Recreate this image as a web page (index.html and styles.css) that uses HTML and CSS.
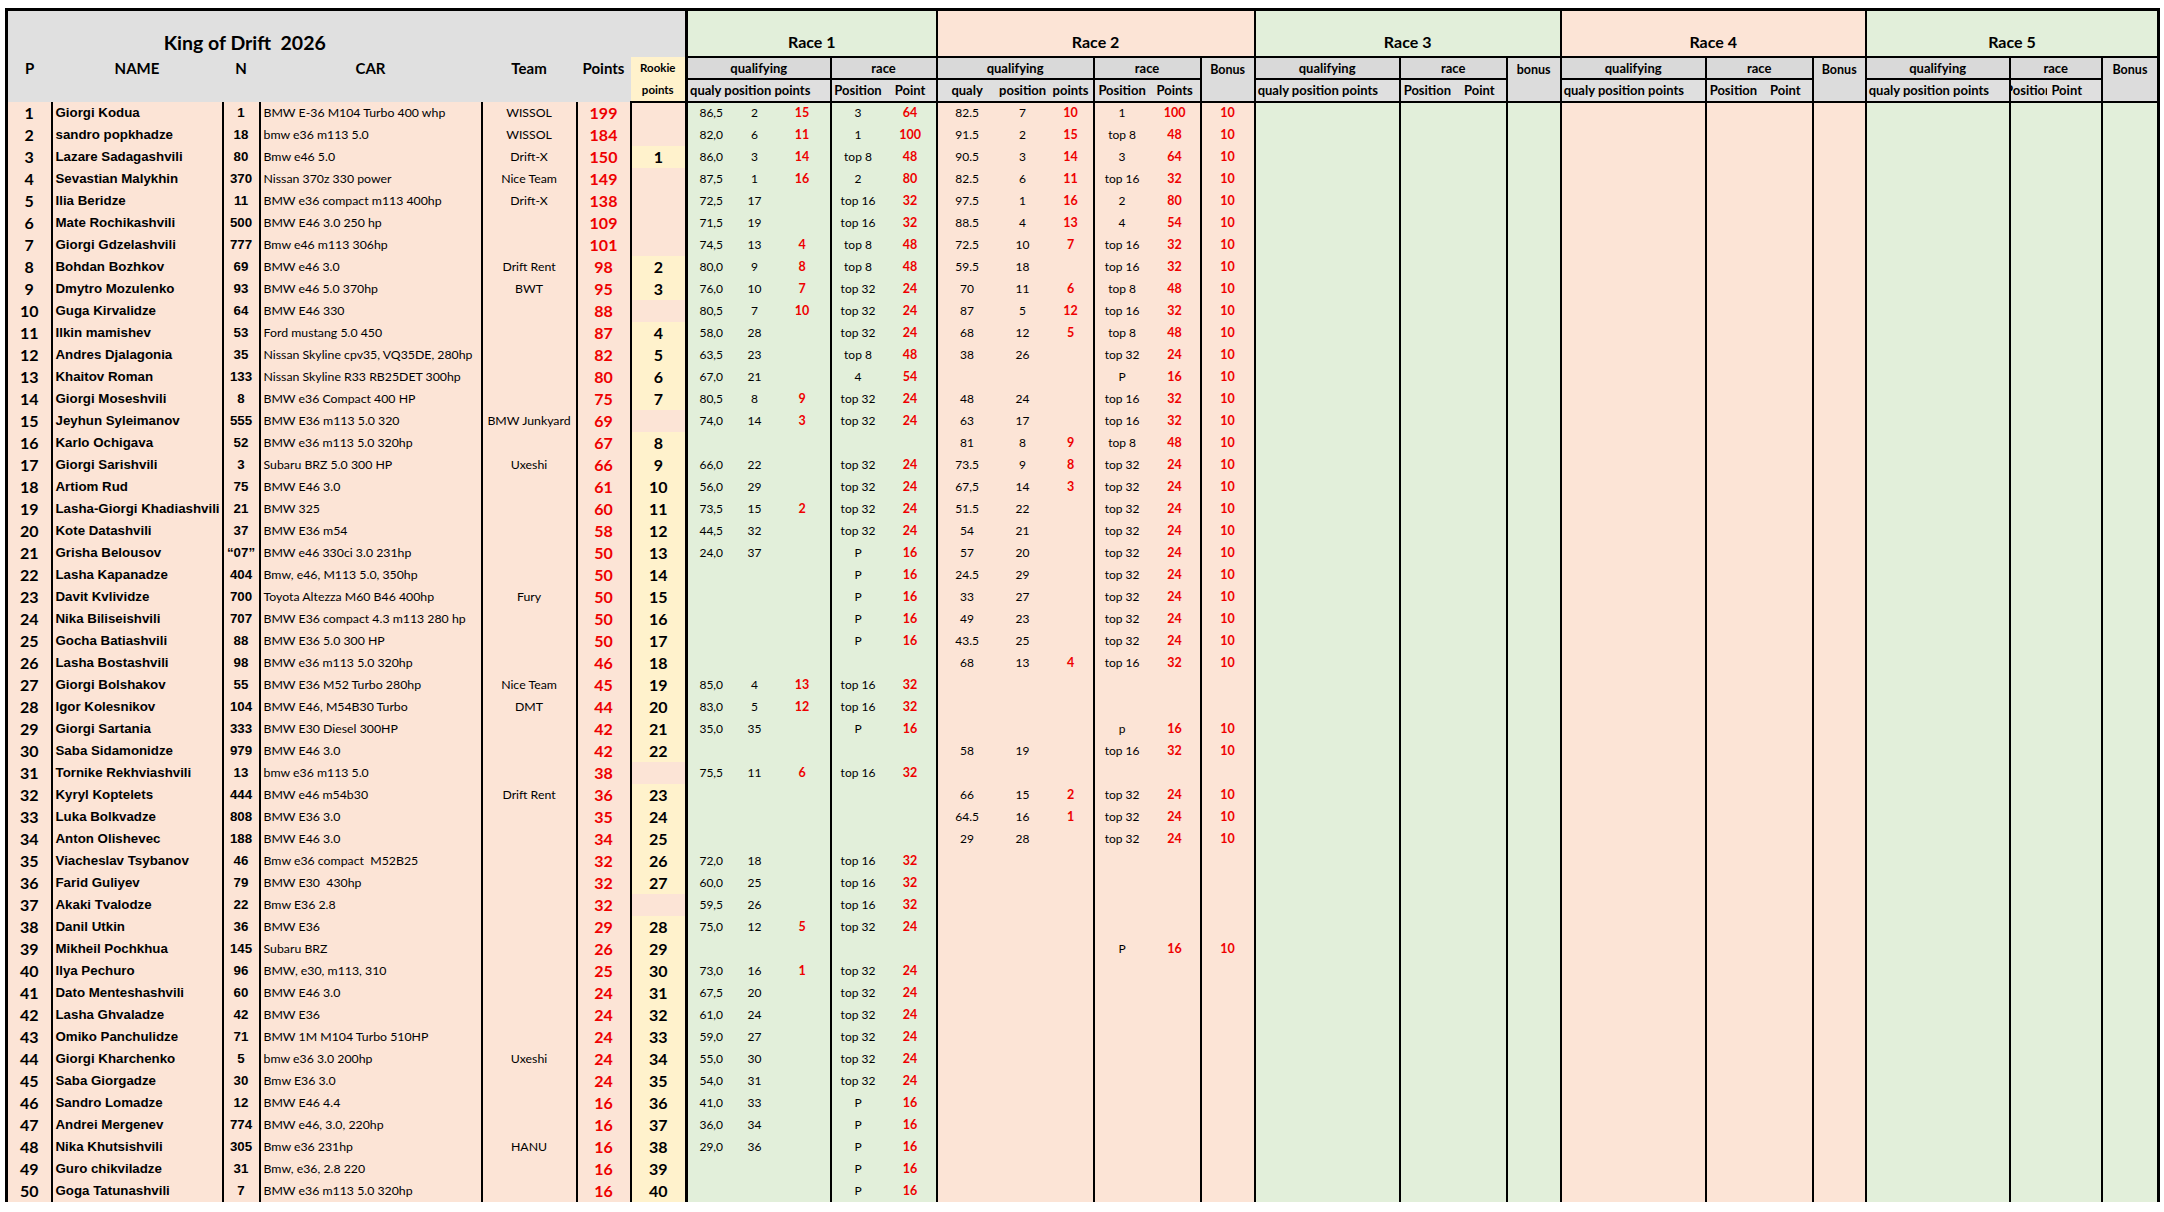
FILE: index.html
```html
<!DOCTYPE html>
<html lang="en">
<head>
<meta charset="utf-8">
<title>King of Drift 2026</title>
<link rel="stylesheet" href="styles.css">
</head>
<body>
<table class="sheet">
<colgroup>
<col class="w45"><col class="w171"><col class="w37"><col class="w222"><col class="w95"><col class="w54"><col class="w56">
<col class="w48"><col class="w40"><col class="w56"><col class="w54"><col class="w52">
<col class="w60"><col class="w52"><col class="w45"><col class="w56"><col class="w51"><col class="w54">
<col class="w145"><col class="w107"><col class="w54">
<col class="w145"><col class="w107"><col class="w53">
<col class="w144"><col class="w92"><col class="w57">
</colgroup>
<thead>
<tr class="ra">
<th colspan="4" class="hl ttl edge-l">King of Drift&nbsp;&nbsp;2026</th>
<th colspan="3" class="hl"></th>
<th colspan="5" class="rt g wide">Race 1</th>
<th colspan="6" class="rt p">Race 2</th>
<th colspan="3" class="rt g">Race 3</th>
<th colspan="3" class="rt p">Race 4</th>
<th colspan="3" class="rt g edge-r">Race 5</th>
</tr>
<tr class="rb">
<th class="hl lbl edge-l">P</th>
<th class="hl lbl">NAME</th>
<th class="hl lbl">N</th>
<th class="hl lbl">CAR</th>
<th class="hl lbl">Team</th>
<th class="hl lbl">Points</th>
<th class="rk">Rookie</th>
<th colspan="3" class="sb wide">qualifying</th>
<th colspan="2" class="sb">race</th>
<th colspan="3" class="sb">qualifying</th>
<th colspan="2" class="sb">race</th>
<th rowspan="2" class="bonus">Bonus</th>
<th class="sb">qualifying</th>
<th class="sb">race</th>
<th rowspan="2" class="bonus">bonus</th>
<th class="sb">qualifying</th>
<th class="sb">race</th>
<th rowspan="2" class="bonus">Bonus</th>
<th class="sb">qualifying</th>
<th class="sb">race</th>
<th rowspan="2" class="bonus edge-r">Bonus</th>
</tr>
<tr class="rc">
<th colspan="6" class="hl edge-l"></th>
<th class="rk rk-low">points</th>
<th colspan="3" class="sc bl wide left">qualy position points</th>
<th class="sc bl">Position</th>
<th class="sc">Point</th>
<th class="sc bl">qualy</th>
<th class="sc">position</th>
<th class="sc">points</th>
<th class="sc bl">Position</th>
<th class="sc">Points</th>
<th class="sc bl left">qualy position points</th>
<th class="sc bl"><span class="pp"><span>Position</span><span>Point</span></span></th>
<th class="sc bl left">qualy position points</th>
<th class="sc bl"><span class="pp"><span>Position</span><span>Point</span></span></th>
<th class="sc bl left">qualy position points</th>
<th class="sc bl"><span class="pp5"><span class="clip">Position</span><span class="pt">Point</span></span></th>
</tr>
</thead>
<tbody>
<tr><td>1</td><td>Giorgi Kodua</td><td>1</td><td>BMW E-36 M104 Turbo 400 whp</td><td>WISSOL</td><td>199</td><td></td><td>86,5</td><td>2</td><td>15</td><td>3</td><td>64</td><td>82.5</td><td>7</td><td>10</td><td>1</td><td>100</td><td>10</td><td></td><td></td><td></td><td></td><td></td><td></td><td></td><td></td><td></td></tr>
<tr><td>2</td><td>sandro popkhadze</td><td>18</td><td>bmw e36 m113 5.0</td><td>WISSOL</td><td>184</td><td></td><td>82,0</td><td>6</td><td>11</td><td>1</td><td>100</td><td>91.5</td><td>2</td><td>15</td><td>top 8</td><td>48</td><td>10</td><td></td><td></td><td></td><td></td><td></td><td></td><td></td><td></td><td></td></tr>
<tr><td>3</td><td>Lazare Sadagashvili</td><td>80</td><td>Bmw e46 5.0</td><td>Drift-X</td><td>150</td><td>1</td><td>86,0</td><td>3</td><td>14</td><td>top 8</td><td>48</td><td>90.5</td><td>3</td><td>14</td><td>3</td><td>64</td><td>10</td><td></td><td></td><td></td><td></td><td></td><td></td><td></td><td></td><td></td></tr>
<tr><td>4</td><td>Sevastian Malykhin</td><td>370</td><td>Nissan 370z 330 power</td><td>Nice Team</td><td>149</td><td></td><td>87,5</td><td>1</td><td>16</td><td>2</td><td>80</td><td>82.5</td><td>6</td><td>11</td><td>top 16</td><td>32</td><td>10</td><td></td><td></td><td></td><td></td><td></td><td></td><td></td><td></td><td></td></tr>
<tr><td>5</td><td>Ilia Beridze</td><td>11</td><td>BMW e36 compact m113 400hp</td><td>Drift-X</td><td>138</td><td></td><td>72,5</td><td>17</td><td></td><td>top 16</td><td>32</td><td>97.5</td><td>1</td><td>16</td><td>2</td><td>80</td><td>10</td><td></td><td></td><td></td><td></td><td></td><td></td><td></td><td></td><td></td></tr>
<tr><td>6</td><td>Mate Rochikashvili</td><td>500</td><td>BMW E46 3.0 250 hp</td><td></td><td>109</td><td></td><td>71,5</td><td>19</td><td></td><td>top 16</td><td>32</td><td>88.5</td><td>4</td><td>13</td><td>4</td><td>54</td><td>10</td><td></td><td></td><td></td><td></td><td></td><td></td><td></td><td></td><td></td></tr>
<tr><td>7</td><td>Giorgi Gdzelashvili</td><td>777</td><td>Bmw e46 m113 306hp</td><td></td><td>101</td><td></td><td>74,5</td><td>13</td><td>4</td><td>top 8</td><td>48</td><td>72.5</td><td>10</td><td>7</td><td>top 16</td><td>32</td><td>10</td><td></td><td></td><td></td><td></td><td></td><td></td><td></td><td></td><td></td></tr>
<tr><td>8</td><td>Bohdan Bozhkov</td><td>69</td><td>BMW e46 3.0</td><td>Drift Rent</td><td>98</td><td>2</td><td>80,0</td><td>9</td><td>8</td><td>top 8</td><td>48</td><td>59.5</td><td>18</td><td></td><td>top 16</td><td>32</td><td>10</td><td></td><td></td><td></td><td></td><td></td><td></td><td></td><td></td><td></td></tr>
<tr><td>9</td><td>Dmytro Mozulenko</td><td>93</td><td>BMW e46 5.0 370hp</td><td>BWT</td><td>95</td><td>3</td><td>76,0</td><td>10</td><td>7</td><td>top 32</td><td>24</td><td>70</td><td>11</td><td>6</td><td>top 8</td><td>48</td><td>10</td><td></td><td></td><td></td><td></td><td></td><td></td><td></td><td></td><td></td></tr>
<tr><td>10</td><td>Guga Kirvalidze</td><td>64</td><td>BMW E46 330</td><td></td><td>88</td><td></td><td>80,5</td><td>7</td><td>10</td><td>top 32</td><td>24</td><td>87</td><td>5</td><td>12</td><td>top 16</td><td>32</td><td>10</td><td></td><td></td><td></td><td></td><td></td><td></td><td></td><td></td><td></td></tr>
<tr><td>11</td><td>Ilkin mamishev</td><td>53</td><td>Ford mustang 5.0 450</td><td></td><td>87</td><td>4</td><td>58,0</td><td>28</td><td></td><td>top 32</td><td>24</td><td>68</td><td>12</td><td>5</td><td>top 8</td><td>48</td><td>10</td><td></td><td></td><td></td><td></td><td></td><td></td><td></td><td></td><td></td></tr>
<tr><td>12</td><td>Andres Djalagonia</td><td>35</td><td>Nissan Skyline cpv35, VQ35DE, 280hp</td><td></td><td>82</td><td>5</td><td>63,5</td><td>23</td><td></td><td>top 8</td><td>48</td><td>38</td><td>26</td><td></td><td>top 32</td><td>24</td><td>10</td><td></td><td></td><td></td><td></td><td></td><td></td><td></td><td></td><td></td></tr>
<tr><td>13</td><td>Khaitov Roman</td><td>133</td><td>Nissan Skyline R33 RB25DET 300hp</td><td></td><td>80</td><td>6</td><td>67,0</td><td>21</td><td></td><td>4</td><td>54</td><td></td><td></td><td></td><td>P</td><td>16</td><td>10</td><td></td><td></td><td></td><td></td><td></td><td></td><td></td><td></td><td></td></tr>
<tr><td>14</td><td>Giorgi Moseshvili</td><td>8</td><td>BMW e36 Compact 400 HP</td><td></td><td>75</td><td>7</td><td>80,5</td><td>8</td><td>9</td><td>top 32</td><td>24</td><td>48</td><td>24</td><td></td><td>top 16</td><td>32</td><td>10</td><td></td><td></td><td></td><td></td><td></td><td></td><td></td><td></td><td></td></tr>
<tr><td>15</td><td>Jeyhun Syleimanov</td><td>555</td><td>BMW E36 m113 5.0 320</td><td>BMW Junkyard</td><td>69</td><td></td><td>74,0</td><td>14</td><td>3</td><td>top 32</td><td>24</td><td>63</td><td>17</td><td></td><td>top 16</td><td>32</td><td>10</td><td></td><td></td><td></td><td></td><td></td><td></td><td></td><td></td><td></td></tr>
<tr><td>16</td><td>Karlo Ochigava</td><td>52</td><td>BMW e36 m113 5.0 320hp</td><td></td><td>67</td><td>8</td><td></td><td></td><td></td><td></td><td></td><td>81</td><td>8</td><td>9</td><td>top 8</td><td>48</td><td>10</td><td></td><td></td><td></td><td></td><td></td><td></td><td></td><td></td><td></td></tr>
<tr><td>17</td><td>Giorgi Sarishvili</td><td>3</td><td>Subaru BRZ 5.0 300 HP</td><td>Uxeshi</td><td>66</td><td>9</td><td>66,0</td><td>22</td><td></td><td>top 32</td><td>24</td><td>73.5</td><td>9</td><td>8</td><td>top 32</td><td>24</td><td>10</td><td></td><td></td><td></td><td></td><td></td><td></td><td></td><td></td><td></td></tr>
<tr><td>18</td><td>Artiom Rud</td><td>75</td><td>BMW E46 3.0</td><td></td><td>61</td><td>10</td><td>56,0</td><td>29</td><td></td><td>top 32</td><td>24</td><td>67,5</td><td>14</td><td>3</td><td>top 32</td><td>24</td><td>10</td><td></td><td></td><td></td><td></td><td></td><td></td><td></td><td></td><td></td></tr>
<tr><td>19</td><td>Lasha-Giorgi Khadiashvili</td><td>21</td><td>BMW 325</td><td></td><td>60</td><td>11</td><td>73,5</td><td>15</td><td>2</td><td>top 32</td><td>24</td><td>51.5</td><td>22</td><td></td><td>top 32</td><td>24</td><td>10</td><td></td><td></td><td></td><td></td><td></td><td></td><td></td><td></td><td></td></tr>
<tr><td>20</td><td>Kote Datashvili</td><td>37</td><td>BMW E36 m54</td><td></td><td>58</td><td>12</td><td>44,5</td><td>32</td><td></td><td>top 32</td><td>24</td><td>54</td><td>21</td><td></td><td>top 32</td><td>24</td><td>10</td><td></td><td></td><td></td><td></td><td></td><td></td><td></td><td></td><td></td></tr>
<tr><td>21</td><td>Grisha Belousov</td><td>“07”</td><td>BMW e46 330ci 3.0 231hp</td><td></td><td>50</td><td>13</td><td>24,0</td><td>37</td><td></td><td>P</td><td>16</td><td>57</td><td>20</td><td></td><td>top 32</td><td>24</td><td>10</td><td></td><td></td><td></td><td></td><td></td><td></td><td></td><td></td><td></td></tr>
<tr><td>22</td><td>Lasha Kapanadze</td><td>404</td><td>Bmw, e46, M113 5.0, 350hp</td><td></td><td>50</td><td>14</td><td></td><td></td><td></td><td>P</td><td>16</td><td>24.5</td><td>29</td><td></td><td>top 32</td><td>24</td><td>10</td><td></td><td></td><td></td><td></td><td></td><td></td><td></td><td></td><td></td></tr>
<tr><td>23</td><td>Davit Kvlividze</td><td>700</td><td>Toyota Altezza M60 B46 400hp</td><td>Fury</td><td>50</td><td>15</td><td></td><td></td><td></td><td>P</td><td>16</td><td>33</td><td>27</td><td></td><td>top 32</td><td>24</td><td>10</td><td></td><td></td><td></td><td></td><td></td><td></td><td></td><td></td><td></td></tr>
<tr><td>24</td><td>Nika Biliseishvili</td><td>707</td><td>BMW E36 compact 4.3 m113 280 hp</td><td></td><td>50</td><td>16</td><td></td><td></td><td></td><td>P</td><td>16</td><td>49</td><td>23</td><td></td><td>top 32</td><td>24</td><td>10</td><td></td><td></td><td></td><td></td><td></td><td></td><td></td><td></td><td></td></tr>
<tr><td>25</td><td>Gocha Batiashvili</td><td>88</td><td>BMW E36 5.0 300 HP</td><td></td><td>50</td><td>17</td><td></td><td></td><td></td><td>P</td><td>16</td><td>43.5</td><td>25</td><td></td><td>top 32</td><td>24</td><td>10</td><td></td><td></td><td></td><td></td><td></td><td></td><td></td><td></td><td></td></tr>
<tr><td>26</td><td>Lasha Bostashvili</td><td>98</td><td>BMW e36 m113 5.0 320hp</td><td></td><td>46</td><td>18</td><td></td><td></td><td></td><td></td><td></td><td>68</td><td>13</td><td>4</td><td>top 16</td><td>32</td><td>10</td><td></td><td></td><td></td><td></td><td></td><td></td><td></td><td></td><td></td></tr>
<tr><td>27</td><td>Giorgi Bolshakov</td><td>55</td><td>BMW E36 M52 Turbo 280hp</td><td>Nice Team</td><td>45</td><td>19</td><td>85,0</td><td>4</td><td>13</td><td>top 16</td><td>32</td><td></td><td></td><td></td><td></td><td></td><td></td><td></td><td></td><td></td><td></td><td></td><td></td><td></td><td></td><td></td></tr>
<tr><td>28</td><td>Igor Kolesnikov</td><td>104</td><td>BMW E46, M54B30 Turbo</td><td>DMT</td><td>44</td><td>20</td><td>83,0</td><td>5</td><td>12</td><td>top 16</td><td>32</td><td></td><td></td><td></td><td></td><td></td><td></td><td></td><td></td><td></td><td></td><td></td><td></td><td></td><td></td><td></td></tr>
<tr><td>29</td><td>Giorgi Sartania</td><td>333</td><td>BMW E30 Diesel 300HP</td><td></td><td>42</td><td>21</td><td>35,0</td><td>35</td><td></td><td>P</td><td>16</td><td></td><td></td><td></td><td>p</td><td>16</td><td>10</td><td></td><td></td><td></td><td></td><td></td><td></td><td></td><td></td><td></td></tr>
<tr><td>30</td><td>Saba Sidamonidze</td><td>979</td><td>BMW E46 3.0</td><td></td><td>42</td><td>22</td><td></td><td></td><td></td><td></td><td></td><td>58</td><td>19</td><td></td><td>top 16</td><td>32</td><td>10</td><td></td><td></td><td></td><td></td><td></td><td></td><td></td><td></td><td></td></tr>
<tr><td>31</td><td>Tornike Rekhviashvili</td><td>13</td><td>bmw e36 m113 5.0</td><td></td><td>38</td><td></td><td>75,5</td><td>11</td><td>6</td><td>top 16</td><td>32</td><td></td><td></td><td></td><td></td><td></td><td></td><td></td><td></td><td></td><td></td><td></td><td></td><td></td><td></td><td></td></tr>
<tr><td>32</td><td>Kyryl Koptelets</td><td>444</td><td>BMW e46 m54b30</td><td>Drift Rent</td><td>36</td><td>23</td><td></td><td></td><td></td><td></td><td></td><td>66</td><td>15</td><td>2</td><td>top 32</td><td>24</td><td>10</td><td></td><td></td><td></td><td></td><td></td><td></td><td></td><td></td><td></td></tr>
<tr><td>33</td><td>Luka Bolkvadze</td><td>808</td><td>BMW E36 3.0</td><td></td><td>35</td><td>24</td><td></td><td></td><td></td><td></td><td></td><td>64.5</td><td>16</td><td>1</td><td>top 32</td><td>24</td><td>10</td><td></td><td></td><td></td><td></td><td></td><td></td><td></td><td></td><td></td></tr>
<tr><td>34</td><td>Anton Olishevec</td><td>188</td><td>BMW E46 3.0</td><td></td><td>34</td><td>25</td><td></td><td></td><td></td><td></td><td></td><td>29</td><td>28</td><td></td><td>top 32</td><td>24</td><td>10</td><td></td><td></td><td></td><td></td><td></td><td></td><td></td><td></td><td></td></tr>
<tr><td>35</td><td>Viacheslav Tsybanov</td><td>46</td><td>Bmw e36 compact&nbsp; M52B25</td><td></td><td>32</td><td>26</td><td>72,0</td><td>18</td><td></td><td>top 16</td><td>32</td><td></td><td></td><td></td><td></td><td></td><td></td><td></td><td></td><td></td><td></td><td></td><td></td><td></td><td></td><td></td></tr>
<tr><td>36</td><td>Farid Guliyev</td><td>79</td><td>BMW E30&nbsp; 430hp</td><td></td><td>32</td><td>27</td><td>60,0</td><td>25</td><td></td><td>top 16</td><td>32</td><td></td><td></td><td></td><td></td><td></td><td></td><td></td><td></td><td></td><td></td><td></td><td></td><td></td><td></td><td></td></tr>
<tr><td>37</td><td>Akaki Tvalodze</td><td>22</td><td>Bmw E36 2.8</td><td></td><td>32</td><td></td><td>59,5</td><td>26</td><td></td><td>top 16</td><td>32</td><td></td><td></td><td></td><td></td><td></td><td></td><td></td><td></td><td></td><td></td><td></td><td></td><td></td><td></td><td></td></tr>
<tr><td>38</td><td>Danil Utkin</td><td>36</td><td>BMW E36</td><td></td><td>29</td><td>28</td><td>75,0</td><td>12</td><td>5</td><td>top 32</td><td>24</td><td></td><td></td><td></td><td></td><td></td><td></td><td></td><td></td><td></td><td></td><td></td><td></td><td></td><td></td><td></td></tr>
<tr><td>39</td><td>Mikheil Pochkhua</td><td>145</td><td>Subaru BRZ</td><td></td><td>26</td><td>29</td><td></td><td></td><td></td><td></td><td></td><td></td><td></td><td></td><td>P</td><td>16</td><td>10</td><td></td><td></td><td></td><td></td><td></td><td></td><td></td><td></td><td></td></tr>
<tr><td>40</td><td>Ilya Pechuro</td><td>96</td><td>BMW, e30, m113, 310</td><td></td><td>25</td><td>30</td><td>73,0</td><td>16</td><td>1</td><td>top 32</td><td>24</td><td></td><td></td><td></td><td></td><td></td><td></td><td></td><td></td><td></td><td></td><td></td><td></td><td></td><td></td><td></td></tr>
<tr><td>41</td><td>Dato Menteshashvili</td><td>60</td><td>BMW E46 3.0</td><td></td><td>24</td><td>31</td><td>67,5</td><td>20</td><td></td><td>top 32</td><td>24</td><td></td><td></td><td></td><td></td><td></td><td></td><td></td><td></td><td></td><td></td><td></td><td></td><td></td><td></td><td></td></tr>
<tr><td>42</td><td>Lasha Ghvaladze</td><td>42</td><td>BMW E36</td><td></td><td>24</td><td>32</td><td>61,0</td><td>24</td><td></td><td>top 32</td><td>24</td><td></td><td></td><td></td><td></td><td></td><td></td><td></td><td></td><td></td><td></td><td></td><td></td><td></td><td></td><td></td></tr>
<tr><td>43</td><td>Omiko Panchulidze</td><td>71</td><td>BMW 1M M104 Turbo 510HP</td><td></td><td>24</td><td>33</td><td>59,0</td><td>27</td><td></td><td>top 32</td><td>24</td><td></td><td></td><td></td><td></td><td></td><td></td><td></td><td></td><td></td><td></td><td></td><td></td><td></td><td></td><td></td></tr>
<tr><td>44</td><td>Giorgi Kharchenko</td><td>5</td><td>bmw e36 3.0 200hp</td><td>Uxeshi</td><td>24</td><td>34</td><td>55,0</td><td>30</td><td></td><td>top 32</td><td>24</td><td></td><td></td><td></td><td></td><td></td><td></td><td></td><td></td><td></td><td></td><td></td><td></td><td></td><td></td><td></td></tr>
<tr><td>45</td><td>Saba Giorgadze</td><td>30</td><td>Bmw E36 3.0</td><td></td><td>24</td><td>35</td><td>54,0</td><td>31</td><td></td><td>top 32</td><td>24</td><td></td><td></td><td></td><td></td><td></td><td></td><td></td><td></td><td></td><td></td><td></td><td></td><td></td><td></td><td></td></tr>
<tr><td>46</td><td>Sandro Lomadze</td><td>12</td><td>BMW E46 4.4</td><td></td><td>16</td><td>36</td><td>41,0</td><td>33</td><td></td><td>P</td><td>16</td><td></td><td></td><td></td><td></td><td></td><td></td><td></td><td></td><td></td><td></td><td></td><td></td><td></td><td></td><td></td></tr>
<tr><td>47</td><td>Andrei Mergenev</td><td>774</td><td>BMW e46, 3.0, 220hp</td><td></td><td>16</td><td>37</td><td>36,0</td><td>34</td><td></td><td>P</td><td>16</td><td></td><td></td><td></td><td></td><td></td><td></td><td></td><td></td><td></td><td></td><td></td><td></td><td></td><td></td><td></td></tr>
<tr><td>48</td><td>Nika Khutsishvili</td><td>305</td><td>Bmw e36 231hp</td><td>HANU</td><td>16</td><td>38</td><td>29,0</td><td>36</td><td></td><td>P</td><td>16</td><td></td><td></td><td></td><td></td><td></td><td></td><td></td><td></td><td></td><td></td><td></td><td></td><td></td><td></td><td></td></tr>
<tr><td>49</td><td>Guro chikviladze</td><td>31</td><td>Bmw, e36, 2.8 220</td><td></td><td>16</td><td>39</td><td></td><td></td><td></td><td>P</td><td>16</td><td></td><td></td><td></td><td></td><td></td><td></td><td></td><td></td><td></td><td></td><td></td><td></td><td></td><td></td><td></td></tr>
<tr><td>50</td><td>Goga Tatunashvili</td><td>7</td><td>BMW e36 m113 5.0 320hp</td><td></td><td>16</td><td>40</td><td></td><td></td><td></td><td>P</td><td>16</td><td></td><td></td><td></td><td></td><td></td><td></td><td></td><td></td><td></td><td></td><td></td><td></td><td></td><td></td><td></td></tr>
</tbody>
</table>
</body>
</html>
```

FILE: styles.css
```css
html, body {
  margin: 0;
  padding: 0;
  background: #ffffff;
}
body {
  padding: 8px 0 0 5px;
  font-family: Lato, "Liberation Sans", sans-serif;
}

.sheet {
  border-collapse: collapse;
  table-layout: fixed;
  width: 2152px;
  color: #000;
}
.sheet th,
.sheet td {
  padding: 0;
  overflow: hidden;
  white-space: nowrap;
  text-align: center;
  vertical-align: middle;
  font-family: Lato, "Liberation Sans", sans-serif;
  box-sizing: border-box;
}

/* column widths */
.w37 { width: 37px; } .w40 { width: 40px; } .w45 { width: 45px; }
.w48 { width: 48px; } .w51 { width: 51px; } .w52 { width: 52px; }
.w53 { width: 53px; } .w54 { width: 54px; } .w56 { width: 56px; }
.w57 { width: 57px; } .w60 { width: 60px; } .w92 { width: 92px; }
.w95 { width: 95px; } .w107 { width: 107px; } .w144 { width: 144px; }
.w145 { width: 145px; } .w171 { width: 171px; } .w222 { width: 222px; }

/* ---------- header ---------- */
.sheet .ra th { height: 47px; border-top: 3px solid #000; }
.sheet .rb th { height: 22px; line-height: 18px; }
.sheet .rc th { height: 23px; line-height: 18px; }

.edge-l { border-left: 3px solid #000; }
.edge-r { border-right: 3px solid #000; }

.hl { background: #e0e0e0; }
.ttl {
  font-size: 19.5px;
  font-weight: bold;
  vertical-align: bottom !important;
  padding-bottom: 3px !important;
  line-height: 22px;
}
.lbl {
  font-size: 15px;
  font-weight: bold;
}
.rk {
  background: #fff2cc;
  font-size: 11.5px;
  font-weight: bold;
  text-align: center;
}
.rk-low {
  border-bottom: 2px solid #000;
  border-right: 3px solid #000;
}

.rt {
  font-size: 16px;
  font-weight: bold;
  vertical-align: bottom !important;
  padding-bottom: 4px !important;
  line-height: 20px;
  border-left: 2px solid #000;
  border-bottom: 2px solid #000;
}
.rt.wide, .sb.wide, .sc.wide { border-left: 3px solid #000; }
.g { background: #e2efda; }
.p { background: #fce4d6; }

.sb {
  background: #d9d9d9;
  font-size: 13px;
  font-weight: bold;
  border-left: 2px solid #000;
  border-bottom: 2px solid #000;
}
.bonus {
  background: #dcdcdc;
  font-size: 12.5px;
  font-weight: bold;
  border-left: 2px solid #000;
  border-bottom: 2px solid #000;
  vertical-align: top !important;
  padding-top: 3px !important;
  line-height: 16px;
}
.sc {
  background: #dfdfdf;
  font-size: 13px;
  font-weight: bold;
  border-bottom: 2px solid #000;
}
.sc.bl { border-left: 2px solid #000; }
.sc.left { text-align: left; padding-left: 2px; }

.pp {
  display: flex;
  justify-content: space-between;
  padding: 0 11px 0 3px;
}
.pp5 {
  display: flex;
  justify-content: flex-start;
  width: 100%;
}
.pp5 .clip {
  width: 36px;
  flex: 0 0 36px;
  display: flex;
  justify-content: center;
  overflow: hidden;
}
.pp5 .pt {
  width: 40px;
  flex: 0 0 40px;
  text-align: center;
}

/* ---------- body ---------- */
.sheet tbody td {
  height: 22px;
  font-size: 12px;
  line-height: 18px;
}

/* backgrounds */
.sheet tbody td:nth-child(-n+6) { background: #fce4d6; }
.sheet tbody td:nth-child(7) { background: #fff2cc; }
.sheet tbody td:nth-child(7):empty { background: #fce4d6; }
.sheet tbody td:nth-child(n+8):nth-child(-n+12) { background: #e2efda; }
.sheet tbody td:nth-child(n+13):nth-child(-n+18) { background: #fce4d6; }
.sheet tbody td:nth-child(n+19):nth-child(-n+21) { background: #e2efda; }
.sheet tbody td:nth-child(n+22):nth-child(-n+24) { background: #fce4d6; }
.sheet tbody td:nth-child(n+25) { background: #e2efda; }

/* vertical rules */
.sheet tbody td:nth-child(1) { border-left: 3px solid #000; }
.sheet tbody td:nth-child(2),
.sheet tbody td:nth-child(3),
.sheet tbody td:nth-child(4),
.sheet tbody td:nth-child(5),
.sheet tbody td:nth-child(6),
.sheet tbody td:nth-child(7),
.sheet tbody td:nth-child(11),
.sheet tbody td:nth-child(13),
.sheet tbody td:nth-child(16),
.sheet tbody td:nth-child(18),
.sheet tbody td:nth-child(n+19) { border-left: 2px solid #000; }
.sheet tbody td:nth-child(8) { border-left: 3px solid #000; }
.sheet tbody td:nth-child(27) { border-right: 3px solid #000; }

/* column typography */
.sheet tbody td:nth-child(1) {
  font-size: 16px;
  font-weight: bold;
}
.sheet tbody td:nth-child(2) {
  font-family: "Liberation Sans", Arial, sans-serif;
  font-weight: bold;
  font-size: 13.3px;
  text-align: left;
  padding-left: 3px;
}
.sheet tbody td:nth-child(3) {
  font-family: "Liberation Sans", Arial, sans-serif;
  font-weight: bold;
  font-size: 13.3px;
}
.sheet tbody td:nth-child(4) {
  font-size: 12.3px;
  text-align: left;
  padding-left: 3px;
}
.sheet tbody td:nth-child(5) {
  font-size: 12.3px;
}
.sheet tbody td:nth-child(6) {
  font-size: 16px;
  font-weight: bold;
  color: #ee0000;
}
.sheet tbody td:nth-child(7) {
  font-size: 16px;
  font-weight: bold;
}
.sheet tbody td:nth-child(10),
.sheet tbody td:nth-child(12),
.sheet tbody td:nth-child(15),
.sheet tbody td:nth-child(17),
.sheet tbody td:nth-child(18) {
  font-weight: bold;
  font-size: 12.5px;
  color: #ee0000;
}
```
